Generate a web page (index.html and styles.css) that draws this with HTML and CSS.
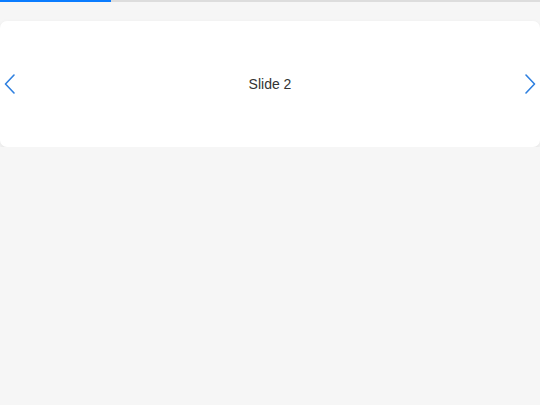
FILE: index.html
```html
<!DOCTYPE html>
<html>
<head>
<meta charset="utf-8">
<link rel="stylesheet" href="styles.css">
</head>
<body>
<div class="progress"><div class="progress-fill" style="width:111px"></div></div>
<div class="carousel">
  <button class="nav nav-prev" aria-label="Previous">
    <svg width="12" height="20" viewBox="0 0 12 20"><path d="M10 1 L1.5 10 L10 19" fill="none" stroke="#2f80e0" stroke-width="1.6" stroke-linecap="round" stroke-linejoin="round"/></svg>
  </button>
  <div class="slide">Slide 2</div>
  <button class="nav nav-next" aria-label="Next">
    <svg width="12" height="20" viewBox="0 0 12 20"><path d="M2 1 L10.5 10 L2 19" fill="none" stroke="#2f80e0" stroke-width="1.6" stroke-linecap="round" stroke-linejoin="round"/></svg>
  </button>
</div>
</body>
</html>
```
FILE: styles.css
```css
html, body {
  margin: 0;
  padding: 0;
  background: #f6f6f6;
  font-family: "Liberation Sans", Arial, sans-serif;
}
.progress {
  height: 2px;
  background: #dddddd;
}
.progress-fill {
  height: 2px;
  background: #0a7cff;
}
.carousel {
  margin-top: 19px;
  height: 126px;
  background: #ffffff;
  border-radius: 7px;
  box-shadow: 0 2px 5px rgba(0,0,0,0.08);
  display: flex;
  align-items: center;
  justify-content: space-between;
  padding: 0 4px;
  box-sizing: border-box;
}
.nav {
  border: 0;
  background: none;
  padding: 0;
  width: 12px;
  height: 20px;
  display: flex;
}
.slide {
  font-size: 14px;
  color: #333333;
}
```
